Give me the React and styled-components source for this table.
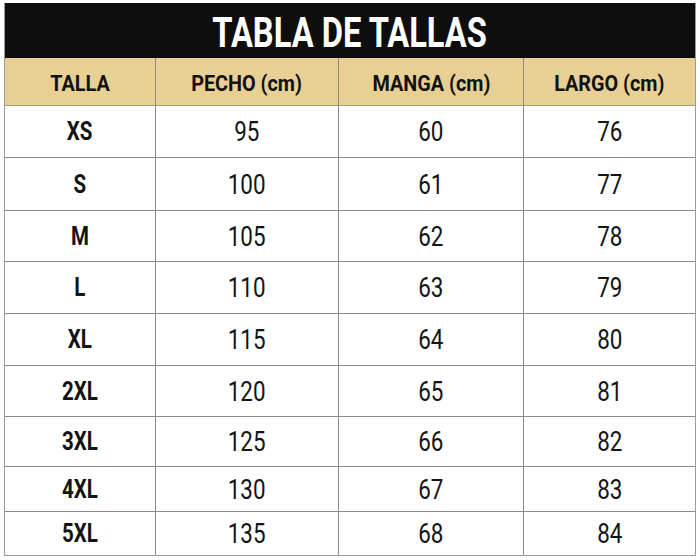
import React from "react";
import styled, { createGlobalStyle } from "styled-components";

const GlobalStyle = createGlobalStyle`
  html, body {
    margin: 0;
    padding: 0;
    background: #ffffff;
  }
  body {
    font-family: Roboto, "Liberation Sans", sans-serif;
  }
`;

const columns = ["TALLA", "PECHO (cm)", "MANGA (cm)", "LARGO (cm)"];

const rows = [
  { size: "XS", pecho: 95, manga: 60, largo: 76, h: 52 },
  { size: "S", pecho: 100, manga: 61, largo: 77, h: 53 },
  { size: "M", pecho: 105, manga: 62, largo: 78, h: 51 },
  { size: "L", pecho: 110, manga: 63, largo: 79, h: 52 },
  { size: "XL", pecho: 115, manga: 64, largo: 80, h: 52 },
  { size: "2XL", pecho: 120, manga: 65, largo: 81, h: 51 },
  { size: "3XL", pecho: 125, manga: 66, largo: 82, h: 50 },
  { size: "4XL", pecho: 130, manga: 67, largo: 83, h: 45 },
  { size: "5XL", pecho: 135, manga: 68, largo: 84, h: 43 },
];

const Sheet = styled.div`
  margin: 3px 0 0 4px;
  width: 692px;
  border: 1px solid #9a9a9a;
  border-top: none;
  box-sizing: border-box;
`;

const Title = styled.div`
  height: 55px;
  background: #0e0e0e;
  color: #ffffff;
  display: flex;
  align-items: center;
  justify-content: center;
  font-weight: 700;
  font-size: 43px;
  padding-top: 3px;
  box-sizing: border-box;
`;

// the reference uses a DIN-like condensed face, so text is narrowed here
const Narrow = styled.span`
  display: inline-block;
  white-space: nowrap;
  transform: scaleX(${(p) => p.$x || 1});
`;

const Grid = styled.div`
  display: grid;
  grid-template-columns: 151px 183px 185px 171px;
`;

const HeadCell = styled.div`
  height: 48px;
  background: #e8cf93;
  color: #121212;
  display: flex;
  align-items: center;
  justify-content: center;
  font-weight: 700;
  font-size: 22px;
  padding-top: 3px;
  box-sizing: border-box;
  border-right: ${(p) => (p.$last ? "none" : "1px solid #8f8a7c")};
  border-bottom: 1px solid #a89a78;
`;

const Cell = styled.div`
  height: ${(p) => p.$h}px;
  display: flex;
  align-items: center;
  justify-content: center;
  color: #141414;
  font-weight: ${(p) => (p.$bold ? 700 : 400)};
  font-size: ${(p) => (p.$bold ? 25 : 28)}px;
  box-sizing: border-box;
  border-right: ${(p) => (p.$last ? "none" : "1px solid #8a8a8a")};
  border-bottom: ${(p) => (p.$end ? "none" : "1px solid #8a8a8a")};
`;

export default function App() {
  return (
    <>
      <GlobalStyle />
      <Sheet>
        <Title>
          <Narrow $x={0.76}>TABLA DE TALLAS</Narrow>
        </Title>
        <Grid>
          {columns.map((c, i) => (
            <HeadCell key={c} $last={i === columns.length - 1}>
              <Narrow $x={0.9}>{c}</Narrow>
            </HeadCell>
          ))}
          {rows.map((r, ri) => {
            const end = ri === rows.length - 1;
            return (
              <React.Fragment key={r.size}>
                <Cell $h={r.h} $bold $end={end}>
                  <Narrow $x={0.82}>{r.size}</Narrow>
                </Cell>
                <Cell $h={r.h} $end={end}>
                  <Narrow $x={0.8}>{r.pecho}</Narrow>
                </Cell>
                <Cell $h={r.h} $end={end}>
                  <Narrow $x={0.8}>{r.manga}</Narrow>
                </Cell>
                <Cell $h={r.h} $end={end} $last>
                  <Narrow $x={0.8}>{r.largo}</Narrow>
                </Cell>
              </React.Fragment>
            );
          })}
        </Grid>
      </Sheet>
    </>
  );
}
